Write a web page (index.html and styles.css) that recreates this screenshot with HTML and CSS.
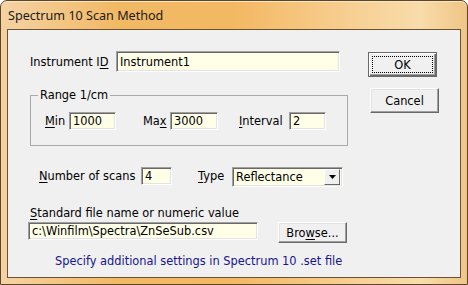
FILE: index.html
```html
<!DOCTYPE html>
<html>
<head>
<meta charset="utf-8">
<link rel="stylesheet" href="styles.css">
</head>
<body>
<div class="window">
  <div class="titlebar"><span class="title">Spectrum 10 Scan Method</span></div>
  <div class="client">
    <div class="form">
      <div class="row row-id">
        <span class="lbl w-id">Instrument I<u>D</u></span>
        <div class="field f-id">Instrument1</div>
      </div>
      <fieldset class="group">
        <legend>Range 1/cm</legend>
        <div class="row">
          <span class="lbl w-min"><u>M</u>in</span>
          <div class="field f-min">1000</div>
          <span class="lbl w-max">Ma<u>x</u></span>
          <div class="field f-max">3000</div>
          <span class="lbl w-int"><u>I</u>nterval</span>
          <div class="field f-int">2</div>
        </div>
      </fieldset>
      <div class="row row-scans">
        <span class="lbl w-scans"><u>N</u>umber of scans</span>
        <div class="field f-scans">4</div>
        <span class="lbl w-type"><u>T</u>ype</span>
        <div class="field combo">
          <span class="combo-text">Reflectance</span>
          <span class="combo-btn"><svg width="7" height="4" viewBox="0 0 7 4"><path d="M0 0h7L3.5 4z" fill="#000"/></svg></span>
        </div>
      </div>
      <div class="std-label"><u>S</u>tandard file name or numeric value</div>
      <div class="row row-file">
        <div class="field f-file">c:\Winfilm\Spectra\ZnSeSub.csv</div>
        <div class="btn b-browse">Bro<u>w</u>se...</div>
      </div>
      <div class="note">Specify additional settings in Spectrum 10 .set file</div>
    </div>
    <div class="buttons">
      <div class="btn b-ok"><span class="focus">OK</span></div>
      <div class="btn b-cancel">Cancel</div>
    </div>
  </div>
</div>
</body>
</html>
```
FILE: styles.css
```css
html, body {
  margin: 0;
  padding: 0;
  background: #ffffff;
}
body {
  font-family: "DejaVu Sans", Verdana, sans-serif;
  font-size: 11.4px;
  color: #000;
}
.window {
  box-sizing: border-box;
  width: 468px;
  height: 285px;
  border: 1px solid #5b4628;
  border-radius: 7px 7px 0 0;
  background: linear-gradient(to right, #f5d2a4 0%, #f2b964 25%, #f3b862 50%, #f7cf93 75%, #f8dcaa 90%, #f0c486 100%);
  padding: 0 6px 6px 6px;
  display: flex;
  flex-direction: column;
  box-shadow: inset 0 1px 0 #fbe6c6;
}
.titlebar {
  height: 28px;
  display: flex;
  align-items: center;
  padding-left: 1px;
}
.title {
  font-family: "Noto Sans", sans-serif;
  font-size: 12.6px;
  color: #1a1a1a;
  margin-top: 1px;
}
.client {
  box-sizing: border-box;
  width: 454px;
  height: 249px;
  border: 1px solid #6a5130;
  background: #f0f0f0;
  display: flex;
}
.form {
  width: 360px;
  padding-left: 22px;
  box-sizing: border-box;
}
.row {
  display: flex;
  align-items: center;
}
.lbl {
  display: block;
  white-space: nowrap;
  line-height: 14px;
}
u { text-decoration: underline; text-underline-offset: 2px; }
.field {
  box-sizing: border-box;
  background: #ffffe8;
  border: 1px solid;
  border-color: #a0a0a0 #ffffff #ffffff #a0a0a0;
  box-shadow: inset 1px 1px 0 #696969, inset -1px -1px 0 #e3e3e3;
  padding: 0 3px;
  white-space: nowrap;
  display: flex;
  align-items: center;
}
.row-id { margin-top: 21px; }
.w-id { width: 86px; }
.f-id { width: 224px; height: 21px; }

.group {
  box-sizing: border-box;
  width: 318px;
  margin: 16px 0 0 0;
  padding: 10px 0 15px 14px;
  border: 1px solid #a9a9a9;
  min-width: 0;
}
.group legend {
  padding: 0 2px;
  margin-left: -7px;
  line-height: 14px;
}
.w-min { width: 24px; }
.f-min { width: 47px; height: 18px; }
.w-max { width: 27px; margin-left: 27px; }
.f-max { width: 48px; height: 18px; }
.w-int { width: 50px; margin-left: 21px; }
.f-int { width: 37px; height: 18px; }

.row-scans { margin-top: 21px; padding-left: 9px; align-items: flex-start; }
.row-scans .lbl { line-height: 18px; }
.w-scans { width: 102px; }
.f-scans { width: 31px; height: 18px; }
.w-type { width: 34px; margin-left: 26px; }
.combo { width: 111px; height: 20px; padding: 0 2px 0 3px; justify-content: space-between; }
.combo-btn {
  box-sizing: border-box;
  width: 16px;
  height: 16px;
  background: #f0f0f0;
  border: 1px solid;
  border-color: #ffffff #696969 #696969 #ffffff;
  display: flex;
  align-items: center;
  justify-content: center;
}

.std-label { margin-top: 19px; line-height: 14px; }
.row-file { margin-top: 2px; margin-left: -2px; align-items: flex-start; }
.f-file { width: 230px; height: 18px; }

.btn {
  box-sizing: border-box;
  background: #f0f0f0;
  border: 1px solid;
  border-color: #ffffff #696969 #696969 #ffffff;
  box-shadow: inset -1px -1px 0 #a0a0a0, inset 1px 1px 0 #e3e3e3;
  display: flex;
  align-items: center;
  justify-content: center;
  line-height: 14px;
}
.b-browse { width: 69px; height: 21px; margin-left: 20px; }
.note {
  margin-top: 11px;
  margin-left: 25px;
  line-height: 14px;
  color: #15158c;
}
.buttons {
  padding-top: 22px;
  display: flex;
  flex-direction: column;
  align-items: flex-start;
}
.b-ok {
  width: 69px;
  height: 25px;
  border: 1px solid #696969;
  box-shadow: inset 1px 1px 0 #ffffff, inset -1px -1px 0 #696969, inset -2px -2px 0 #a0a0a0;
}
.focus {
  box-sizing: border-box;
  width: 61px;
  height: 17px;
  border: 1px dotted #000;
  display: flex;
  align-items: center;
  justify-content: center;
}
.b-cancel { width: 69px; height: 25px; margin-top: 11px; margin-left: 2px; }
```
